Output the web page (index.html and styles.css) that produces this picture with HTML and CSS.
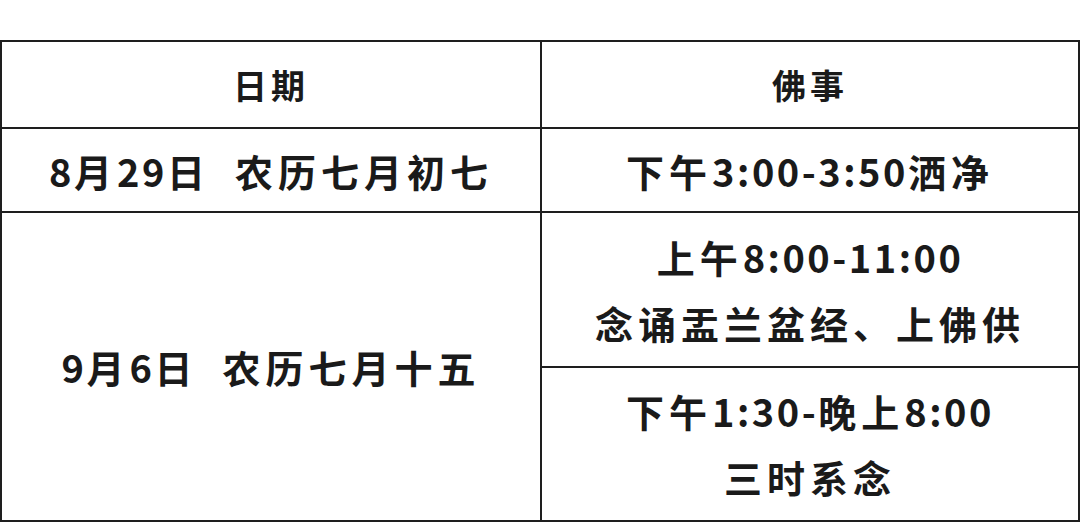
FILE: index.html
```html
<!DOCTYPE html>
<html lang="zh-CN">
<head>
<meta charset="utf-8">
<title>佛事安排</title>
<link rel="stylesheet" href="styles.css">
</head>
<body>
<div class="page">
  <div class="table">
    <div class="cell head">日期</div>
    <div class="cell head">佛事</div>
    <div class="cell body"><span><span class="num">8</span>月<span class="num">29</span>日<span class="gap"> </span>农历七月初七</span></div>
    <div class="cell body"><span>下午<span class="num">3:00-3:50</span>洒净</span></div>
    <div class="cell body span"><span><span class="num">9</span>月<span class="num">6</span>日<span class="gap"> </span>农历七月十五</span></div>
    <div class="cell body multi"><span>上午<span class="num">8:00-11:00</span></span><span>念诵盂兰盆经、上佛供</span></div>
    <div class="cell body multi"><span>下午<span class="num">1:30-</span>晚上<span class="num">8:00</span></span><span>三时系念</span></div>
  </div>
</div>
</body>
</html>
```

FILE: styles.css
```css
html, body {
  margin: 0;
  padding: 0;
  background: #ffffff;
}
.page {
  width: 1080px;
  height: 529px;
  padding-top: 40px;
  box-sizing: border-box;
}
.table {
  display: grid;
  grid-template-columns: 538px 536px;
  grid-template-rows: 85px 82px 153px 152px;
  gap: 2px;
  padding: 2px;
  background: #1e1e1e;
  width: 1080px;
  box-sizing: border-box;
}
.cell {
  background: #ffffff;
  display: flex;
  flex-direction: column;
  align-items: center;
  justify-content: center;
  color: #1a1a1a;
  font-family: "Noto Sans CJK SC", "Noto Sans", sans-serif;
  font-weight: 700;
  white-space: nowrap;
}
.head {
  font-size: 34px;
  letter-spacing: 4px;
}
.body {
  font-size: 38px;
  letter-spacing: 5px;
}
.num {
  letter-spacing: 2.5px;
}
.gap {
  display: inline-block;
  width: 25px;
}
.span {
  grid-row: 3 / span 2;
  grid-column: 1;
}
.multi {
  line-height: 66px;
}
```
